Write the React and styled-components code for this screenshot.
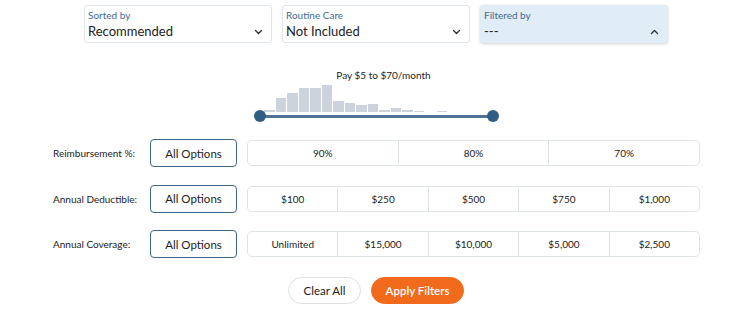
import React from 'react';
import styled, { createGlobalStyle } from 'styled-components';

const GlobalStyle = createGlobalStyle`
  html, body {
    margin: 0;
    padding: 0;
    background: #fff;
    font-family: Lato, "Open Sans", sans-serif;
    color: #222;
  }
`;

const Page = styled.div`
  width: 750px;
  height: 315px;
  display: flex;
  flex-direction: column;
  align-items: center;
  box-sizing: border-box;
  padding-top: 5px;
`;

const SelectRow = styled.div`
  display: flex;
  gap: 10px;
  margin-left: 2px;
`;

const Select = styled.div`
  width: 188px;
  height: 38px;
  box-sizing: border-box;
  border: 1px solid ${p => (p.$active ? 'transparent' : '#dfe6ee')};
  border-radius: 3px;
  background: ${p => (p.$active ? '#e1edf6' : '#fff')};
  box-shadow: ${p => (p.$active ? '0 1px 3px rgba(0, 0, 0, 0.18)' : 'none')};
  padding: 3px 6px 0 3px;
  display: flex;
  flex-direction: column;
`;

const SelectLabel = styled.div`
  font-size: 10px;
  color: #3f6a93;
  line-height: 13px;
`;

const SelectValue = styled.div`
  display: flex;
  align-items: center;
  justify-content: space-between;
  font-size: 13px;
  line-height: 19px;
  color: #222;
`;

const Chevron = ({ up }) => (
  <svg width="9" height="6" viewBox="0 0 9 6" style={{ marginRight: 2 }}>
    <path
      d={up ? 'M1.5 4.5 L4.5 1.5 L7.5 4.5' : 'M1.5 1.5 L4.5 4.5 L7.5 1.5'}
      fill="none"
      stroke="#333"
      strokeWidth="1.4"
      strokeLinecap="round"
      strokeLinejoin="round"
    />
  </svg>
);

const PriceBlock = styled.div`
  margin-top: 25px;
  display: flex;
  flex-direction: column;
  align-items: center;
  margin-left: 3px;
`;

const PriceText = styled.div`
  font-size: 10px;
  color: #222;
  line-height: 14px;
  margin-left: 14px;
`;

const Histogram = styled.div`
  margin-top: 3px;
  width: 233px;
  display: flex;
  align-items: flex-end;
  height: 27px;
  padding-left: 4px;
  box-sizing: border-box;
  gap: 1px;
`;

const Bar = styled.div`
  width: 10.5px;
  background: #ccd3dc;
`;

const Track = styled.div`
  position: relative;
  width: 233px;
  height: 3px;
  margin-top: 3px;
  background: #4f7394;
`;

const Handle = styled.div`
  position: absolute;
  top: -5px;
  width: 12px;
  height: 12px;
  border-radius: 50%;
  background: #2f5d85;
  ${p => (p.$right ? 'right: -6px;' : 'left: -6px;')}
`;

const Rows = styled.div`
  margin-top: 21px;
  display: flex;
  flex-direction: column;
  gap: 17.5px;
  align-self: stretch;
  padding-left: 53px;
  padding-right: 50px;
`;

const Row = styled.div`
  display: flex;
  align-items: center;
  height: 28px;
`;

const RowLabel = styled.div`
  width: 97px;
  font-size: 10px;
  color: #222;
`;

const AllButton = styled.button`
  width: 87px;
  height: 28px;
  box-sizing: border-box;
  border: 1.5px solid #3f6588;
  border-radius: 4px;
  background: #fff;
  font-family: inherit;
  font-size: 11.5px;
  color: #222;
  padding: 0;
  margin-right: 10px;
`;

const Segments = styled.div`
  flex: 1;
  height: 26px;
  display: flex;
  border: 1px solid #dfe4ea;
  border-radius: 5px;
  box-sizing: border-box;
  overflow: hidden;
`;

const Segment = styled.div`
  flex: 1;
  display: flex;
  align-items: center;
  justify-content: center;
  font-size: 10px;
  color: #222;
  & + & {
    border-left: 1px solid #dfe4ea;
  }
`;

const Actions = styled.div`
  margin-top: 19px;
  display: flex;
  gap: 10px;
  margin-left: 2px;
`;

const PillButton = styled.button`
  height: 27px;
  border-radius: 14px;
  font-family: inherit;
  font-size: 11.5px;
  padding: 0;
  width: ${p => p.$w}px;
  border: 1px solid ${p => (p.$primary ? '#f26b1d' : '#dcdfe3')};
  background: ${p => (p.$primary ? '#f26b1d' : '#fff')};
  color: ${p => (p.$primary ? '#fff' : '#222')};
  font-weight: ${p => (p.$primary ? 600 : 400)};
`;

const bars = [2, 14, 19, 24, 24, 27, 11, 9, 7, 8, 2, 4, 2, 1.5, 0, 1.5];

const rows = [
  { label: 'Reimbursement %:', options: ['90%', '80%', '70%'] },
  { label: 'Annual Deductible:', options: ['$100', '$250', '$500', '$750', '$1,000'] },
  { label: 'Annual Coverage:', options: ['Unlimited', '$15,000', '$10,000', '$5,000', '$2,500'] },
];

export default function App() {
  return (
    <Page>
      <GlobalStyle />
      <SelectRow>
        <Select>
          <SelectLabel>Sorted by</SelectLabel>
          <SelectValue>Recommended<Chevron /></SelectValue>
        </Select>
        <Select>
          <SelectLabel>Routine Care</SelectLabel>
          <SelectValue>Not Included<Chevron /></SelectValue>
        </Select>
        <Select $active>
          <SelectLabel>Filtered by</SelectLabel>
          <SelectValue>---<Chevron up /></SelectValue>
        </Select>
      </SelectRow>

      <PriceBlock>
        <PriceText>Pay $5 to $70/month</PriceText>
        <Histogram>
          {bars.map((h, i) => (
            <Bar key={i} style={{ height: h }} />
          ))}
        </Histogram>
        <Track>
          <Handle />
          <Handle $right />
        </Track>
      </PriceBlock>

      <Rows>
        {rows.map(r => (
          <Row key={r.label}>
            <RowLabel>{r.label}</RowLabel>
            <AllButton>All Options</AllButton>
            <Segments>
              {r.options.map(o => (
                <Segment key={o}>{o}</Segment>
              ))}
            </Segments>
          </Row>
        ))}
      </Rows>

      <Actions>
        <PillButton $w={73}>Clear All</PillButton>
        <PillButton $w={93} $primary>Apply Filters</PillButton>
      </Actions>
    </Page>
  );
}
